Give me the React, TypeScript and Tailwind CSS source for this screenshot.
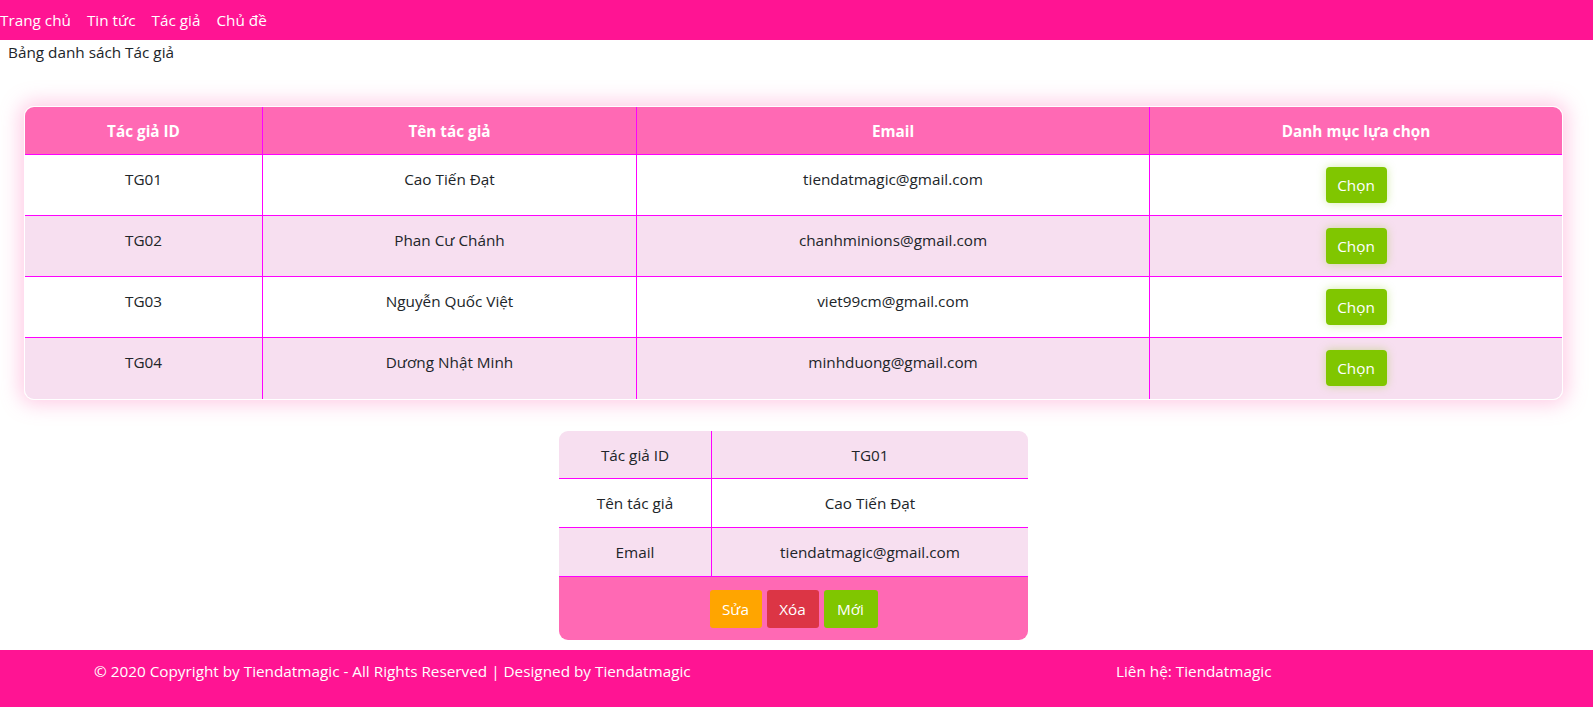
import React from "react"

interface Author {
    id: string
    name: string
    email: string
}

const authors: Author[] = [
    { id: "TG01", name: "Cao Tiến Đạt", email: "tiendatmagic@gmail.com" },
    { id: "TG02", name: "Phan Cư Chánh", email: "chanhminions@gmail.com" },
    { id: "TG03", name: "Nguyễn Quốc Việt", email: "viet99cm@gmail.com" },
    { id: "TG04", name: "Dương Nhật Minh", email: "minhduong@gmail.com" },
]

const navItems = ["Trang chủ", "Tin tức", "Tác giả", "Chủ đề"]

export default function App() {
    const selected = authors[0]

    return (
        <div className="min-h-screen bg-white text-[15.3px] leading-6 text-[#212529] font-['Open_Sans',sans-serif]">
            <nav className="h-[40px] bg-[#ff1493] flex items-center gap-[16px] text-white">
                {navItems.map((item) => (
                    <a key={item} href="#" className="text-white">{item}</a>
                ))}
            </nav>

            <div className="w-[1587px]">
                <p className="pl-[8px]">Bảng danh sách Tác giả</p>

                <div className="mx-[24px] mt-[42px] rounded-[10px] border border-white overflow-hidden shadow-[0_0_20px_4px_rgba(255,105,180,0.35)]">
                    <div className="grid grid-cols-[238px_374px_513px_1fr] bg-[#ff69b4] text-white font-bold h-[48px] border-b border-[#ff00ff]">
                        <div className="flex items-center justify-center border-r border-[#ff00ff]">Tác giả ID</div>
                        <div className="flex items-center justify-center border-r border-[#ff00ff]">Tên tác giả</div>
                        <div className="flex items-center justify-center border-r border-[#ff00ff]">Email</div>
                        <div className="flex items-center justify-center">Danh mục lựa chọn</div>
                    </div>
                    {authors.map((a, i) => (
                        <div
                            key={a.id}
                            className={
                                "grid grid-cols-[238px_374px_513px_1fr] h-[61px] text-center " +
                                (i % 2 === 1 ? "bg-[#f7dff0] " : "bg-white ") +
                                (i < authors.length - 1 ? "border-b border-[#ff00ff]" : "h-[60px]")
                            }
                        >
                            <div className="pt-[12px] border-r border-[#ff00ff]">{a.id}</div>
                            <div className="pt-[12px] border-r border-[#ff00ff]">{a.name}</div>
                            <div className="pt-[12px] border-r border-[#ff00ff]">{a.email}</div>
                            <div className="pt-[12px] flex justify-center items-start">
                                <button className="h-[36px] w-[61px] rounded-[4px] bg-[#80c600] text-white shadow-[0_0_10px_rgba(128,198,0,0.35)]">
                                    Chọn
                                </button>
                            </div>
                        </div>
                    ))}
                </div>

                <div className="mx-auto mt-[31px] w-[469px] rounded-[9px] overflow-hidden text-center">
                    <div className="grid grid-cols-[153px_1fr] h-[48px] bg-[#f7dff0] border-b border-[#ff00ff]">
                        <div className="flex items-center justify-center border-r border-[#ff00ff]">Tác giả ID</div>
                        <div className="flex items-center justify-center">{selected.id}</div>
                    </div>
                    <div className="grid grid-cols-[153px_1fr] h-[49px] bg-white border-b border-[#ff00ff]">
                        <div className="flex items-center justify-center border-r border-[#ff00ff]">Tên tác giả</div>
                        <div className="flex items-center justify-center">{selected.name}</div>
                    </div>
                    <div className="grid grid-cols-[153px_1fr] h-[49px] bg-[#f7dff0] border-b border-[#ff00ff]">
                        <div className="flex items-center justify-center border-r border-[#ff00ff]">Email</div>
                        <div className="flex items-center justify-center">{selected.email}</div>
                    </div>
                    <div className="h-[63px] bg-[#ff69b4] flex justify-center items-start pt-[13px] gap-[5px]">
                        <button className="h-[38px] w-[52px] rounded-[3px] bg-[#ffa500] text-white">Sửa</button>
                        <button className="h-[38px] w-[52px] rounded-[3px] bg-[#dc3545] text-white">Xóa</button>
                        <button className="h-[38px] w-[54px] rounded-[3px] bg-[#80c600] text-white">Mới</button>
                    </div>
                </div>
            </div>

            <footer className="mt-[10px] h-[60px] bg-[#ff1493] text-white flex pt-[9px]">
                <div className="w-[1116px] pl-[94px]">
                    © 2020 Copyright by Tiendatmagic - All Rights Reserved | Designed by Tiendatmagic
                </div>
                <div>Liên hệ: Tiendatmagic</div>
            </footer>
        </div>
    )
}
